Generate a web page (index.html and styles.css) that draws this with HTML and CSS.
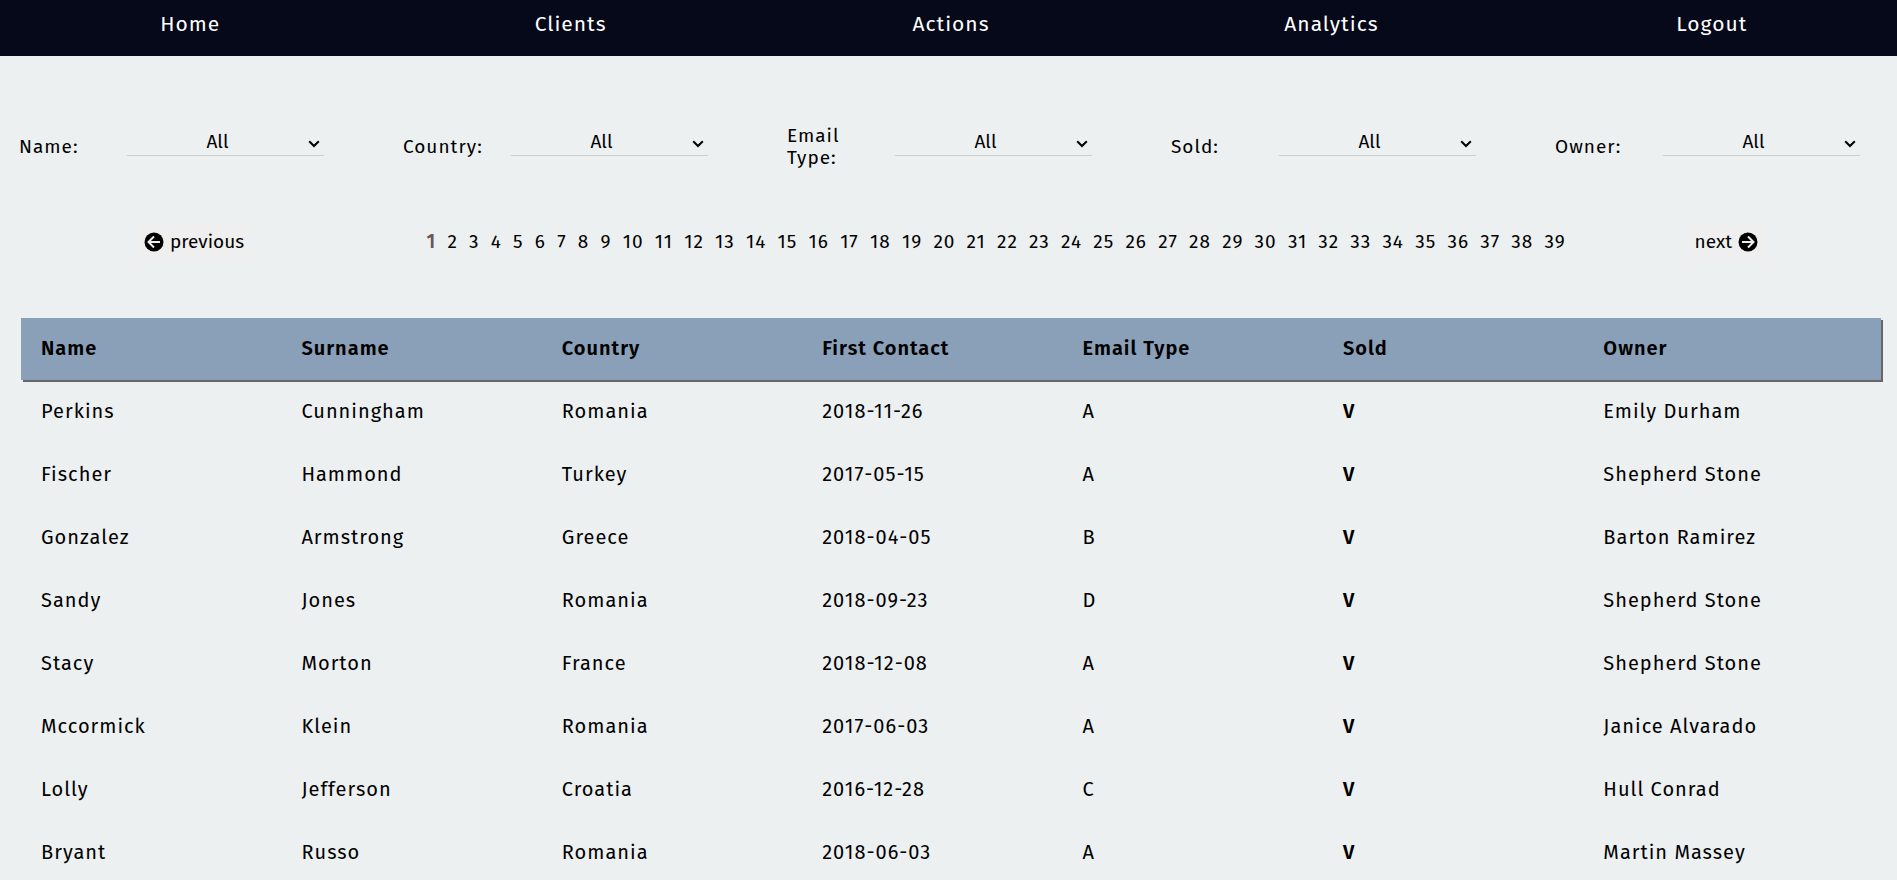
FILE: index.html
```html
<!DOCTYPE html>
<html lang="en">
<head>
<meta charset="utf-8">
<title>Actions</title>
<link rel="stylesheet" href="styles.css">
</head>
<body>
<nav class="nav">
  <a href="#">Home</a><a href="#">Clients</a><a href="#">Actions</a><a href="#">Analytics</a><a href="#">Logout</a>
</nav>
<main>
  <form class="filters">
    <div class="filter"><label for="f-name">Name:</label><div class="field"><select id="f-name"><option>All</option></select><svg viewBox="0 0 12 8"><path d="M1.2 1.2 6 6l4.800-4.800"/></svg></div></div>
    <div class="filter"><label for="f-country">Country:</label><div class="field"><select id="f-country"><option>All</option></select><svg viewBox="0 0 12 8"><path d="M1.2 1.2 6 6l4.800-4.800"/></svg></div></div>
    <div class="filter"><label for="f-email">Email Type:</label><div class="field"><select id="f-email"><option>All</option></select><svg viewBox="0 0 12 8"><path d="M1.2 1.2 6 6l4.800-4.800"/></svg></div></div>
    <div class="filter"><label for="f-sold">Sold:</label><div class="field"><select id="f-sold"><option>All</option></select><svg viewBox="0 0 12 8"><path d="M1.2 1.2 6 6l4.800-4.800"/></svg></div></div>
    <div class="filter"><label for="f-owner">Owner:</label><div class="field"><select id="f-owner"><option>All</option></select><svg viewBox="0 0 12 8"><path d="M1.2 1.2 6 6l4.800-4.800"/></svg></div></div>
  </form>
  <div class="pager">
    <button type="button" class="step"><svg viewBox="0 0 20 20"><circle cx="10" cy="10" r="9.500"/><path d="M16 10H5M10 4.500 4.500 10l5.500 5.500"/></svg>previous</button>
    <div class="pages">
      <a href="#" class="current">1</a><a href="#">2</a><a href="#">3</a><a href="#">4</a><a href="#">5</a><a href="#">6</a><a href="#">7</a><a href="#">8</a><a href="#">9</a><a href="#">10</a><a href="#">11</a><a href="#">12</a><a href="#">13</a><a href="#">14</a><a href="#">15</a><a href="#">16</a><a href="#">17</a><a href="#">18</a><a href="#">19</a><a href="#">20</a><a href="#">21</a><a href="#">22</a><a href="#">23</a><a href="#">24</a><a href="#">25</a><a href="#">26</a><a href="#">27</a><a href="#">28</a><a href="#">29</a><a href="#">30</a><a href="#">31</a><a href="#">32</a><a href="#">33</a><a href="#">34</a><a href="#">35</a><a href="#">36</a><a href="#">37</a><a href="#">38</a><a href="#">39</a>
    </div>
    <button type="button" class="step">next<svg viewBox="0 0 20 20"><circle cx="10" cy="10" r="9.500"/><path d="M4 10h11M10 4.500l5.500 5.500-5.500 5.500"/></svg></button>
  </div>
  <table class="clients">
    <thead><tr><th>Name</th><th>Surname</th><th>Country</th><th>First Contact</th><th>Email Type</th><th>Sold</th><th>Owner</th></tr></thead>
    <tbody>
      <tr><td>Perkins</td><td>Cunningham</td><td>Romania</td><td>2018-11-26</td><td>A</td><td class="sold">V</td><td>Emily Durham</td></tr>
      <tr><td>Fischer</td><td>Hammond</td><td>Turkey</td><td>2017-05-15</td><td>A</td><td class="sold">V</td><td>Shepherd Stone</td></tr>
      <tr><td>Gonzalez</td><td>Armstrong</td><td>Greece</td><td>2018-04-05</td><td>B</td><td class="sold">V</td><td>Barton Ramirez</td></tr>
      <tr><td>Sandy</td><td>Jones</td><td>Romania</td><td>2018-09-23</td><td>D</td><td class="sold">V</td><td>Shepherd Stone</td></tr>
      <tr><td>Stacy</td><td>Morton</td><td>France</td><td>2018-12-08</td><td>A</td><td class="sold">V</td><td>Shepherd Stone</td></tr>
      <tr><td>Mccormick</td><td>Klein</td><td>Romania</td><td>2017-06-03</td><td>A</td><td class="sold">V</td><td>Janice Alvarado</td></tr>
      <tr><td>Lolly</td><td>Jefferson</td><td>Croatia</td><td>2016-12-28</td><td>C</td><td class="sold">V</td><td>Hull Conrad</td></tr>
      <tr><td>Bryant</td><td>Russo</td><td>Romania</td><td>2018-06-03</td><td>A</td><td class="sold">V</td><td>Martin Massey</td></tr>
    </tbody>
  </table>
</main>
</body>
</html>
```

FILE: styles.css
```css
* { box-sizing: border-box; }
html { scrollbar-width: none; }
body {
  margin: 0;
  background: #ecf0f1;
  color: #000;
  font: 19px/22px "Fira Sans", "Noto Sans", sans-serif;
  letter-spacing: 1px;
}
a { color: inherit; text-decoration: none; }

.nav {
  display: grid;
  grid-template-columns: repeat(5, 1fr);
  gap: 5px;
  background: #060919;
  color: #fff;
  font-size: 21px;
  line-height: 24px;
  text-align: center;
}
.nav a { padding: 12px 0 20px 5px; }

.filters {
  display: grid;
  grid-template-columns: repeat(5, 1fr);
  gap: 79px;
  padding: 69px 37px 0 19px;
}
.filter {
  display: grid;
  grid-template-columns: 108px 1fr;
  align-items: center;
  height: 44px;
}
.filter label { padding-right: 20px; }
.field { position: relative; margin-bottom: 8px; }
.field select {
  display: block;
  appearance: none;
  width: 100%;
  height: 26px;
  padding: 0 16px 2px 0;
  border: 0;
  border-bottom: 1px solid #cbcfd0;
  border-radius: 0;
  background: none;
  color: inherit;
  font: inherit;
  text-align-last: center;
}
.field svg {
  position: absolute;
  right: 4px;
  top: 10px;
  width: 12px;
  height: 8px;
  fill: none;
  stroke: #000;
  stroke-width: 2;
  pointer-events: none;
}

.pager {
  display: flex;
  justify-content: space-between;
  align-items: center;
  padding: 55px 132px 0 137px;
}
.step {
  display: flex;
  align-items: center;
  gap: 6px;
  height: 36px;
  padding: 0 7px;
  border: 0;
  background: #efefef;
  color: #000;
  font: inherit;
}
.step svg { width: 20px; height: 20px; fill: #000; }
.step path { fill: none; stroke: #efefef; stroke-width: 2; }
.pages {
  display: flex;
  justify-content: space-between;
  width: 70%;
  margin-left: 54px;
}
.current { color: #6b5555; font-weight: 600; }

.clients {
  width: calc(100% - 37px);
  margin: 58px 16px 0 21px;
  border-collapse: collapse;
  table-layout: fixed;
  font-size: 20px;
}
.clients thead { background: #8aa0b8; box-shadow: 2px 2px #666; }
.clients th, .clients td {
  width: 14%;
  height: 63px;
  padding: 0 0 1px 20px;
  text-align: left;
  font-weight: 400;
}
.clients th { height: 62px; padding-bottom: 2px; font-weight: 600; }
.clients th:last-child { width: 16%; }
.clients .sold { font-weight: 600; }
```
